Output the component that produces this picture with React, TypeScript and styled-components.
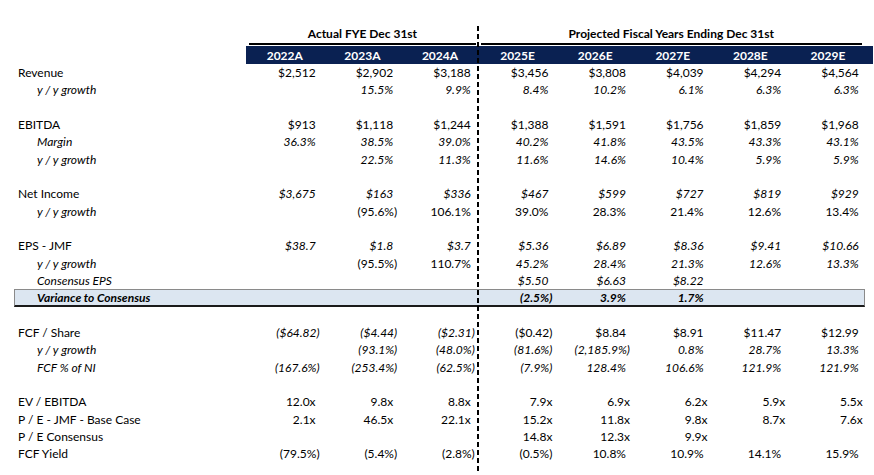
import styled, { createGlobalStyle } from 'styled-components'

const GlobalStyle = createGlobalStyle`
  html, body {
    margin: 0;
    padding: 0;
    background: #ffffff;
  }
  body {
    font-family: Lato, "Liberation Sans", sans-serif;
    font-size: 12px;
    color: #000;
  }
`

const NAVY = '#0a2152'
const COL = 77.6
const ROW = 17.33

type Row = {
  label?: string
  sub?: boolean       // indented, italic label
  strong?: boolean    // bold italic, sits in the shaded box
  values?: string[]
  italic?: string     // mask per column: 'i' italic, '-' upright
}

const actualYears = ['2022A', '2023A', '2024A']
const projectedYears = ['2025E', '2026E', '2027E', '2028E', '2029E']

const rows: Row[] = [
  { label: 'Revenue', values: ['$2,512', '$2,902', '$3,188', '$3,456', '$3,808', '$4,039', '$4,294', '$4,564'] },
  { label: 'y / y growth', sub: true, values: ['', '15.5%', '9.9%', '8.4%', '10.2%', '6.1%', '6.3%', '6.3%'], italic: 'iiiiiiii' },
  {},
  { label: 'EBITDA', values: ['$913', '$1,118', '$1,244', '$1,388', '$1,591', '$1,756', '$1,859', '$1,968'] },
  { label: 'Margin', sub: true, values: ['36.3%', '38.5%', '39.0%', '40.2%', '41.8%', '43.5%', '43.3%', '43.1%'], italic: 'iiiiiiii' },
  { label: 'y / y growth', sub: true, values: ['', '22.5%', '11.3%', '11.6%', '14.6%', '10.4%', '5.9%', '5.9%'], italic: 'iiiiiiii' },
  {},
  { label: 'Net Income', values: ['$3,675', '$163', '$336', '$467', '$599', '$727', '$819', '$929'], italic: 'iiiiiiii' },
  { label: 'y / y growth', sub: true, values: ['', '(95.6%)', '106.1%', '39.0%', '28.3%', '21.4%', '12.6%', '13.4%'] },
  {},
  { label: 'EPS - JMF', values: ['$38.7', '$1.8', '$3.7', '$5.36', '$6.89', '$8.36', '$9.41', '$10.66'], italic: 'iiiiiiii' },
  { label: 'y / y growth', sub: true, values: ['', '(95.5%)', '110.7%', '45.2%', '28.4%', '21.3%', '12.6%', '13.3%'], italic: '---iiiii' },
  { label: 'Consensus EPS', sub: true, values: ['', '', '', '$5.50', '$6.63', '$8.22', '', ''], italic: 'iiiiiiii' },
  { label: 'Variance to Consensus', sub: true, strong: true, values: ['', '', '', '(2.5%)', '3.9%', '1.7%', '', ''], italic: 'iiiiiiii' },
  {},
  { label: 'FCF / Share', values: ['($64.82)', '($4.44)', '($2.31)', '($0.42)', '$8.84', '$8.91', '$11.47', '$12.99'], italic: 'iii-----' },
  { label: 'y / y growth', sub: true, values: ['', '(93.1%)', '(48.0%)', '(81.6%)', '(2,185.9%)', '0.8%', '28.7%', '13.3%'], italic: 'iiiiiiii' },
  { label: 'FCF % of NI', sub: true, values: ['(167.6%)', '(253.4%)', '(62.5%)', '(7.9%)', '128.4%', '106.6%', '121.9%', '121.9%'], italic: 'iiiiiiii' },
  {},
  { label: 'EV / EBITDA', values: ['12.0x', '9.8x', '8.8x', '7.9x', '6.9x', '6.2x', '5.9x', '5.5x'] },
  { label: 'P / E - JMF - Base Case', values: ['2.1x', '46.5x', '22.1x', '15.2x', '11.8x', '9.8x', '8.7x', '7.6x'] },
  { label: 'P / E Consensus', values: ['', '', '', '14.8x', '12.3x', '9.9x', '', ''] },
  { label: 'FCF Yield', values: ['(79.5%)', '(5.4%)', '(2.8%)', '(0.5%)', '10.8%', '10.9%', '14.1%', '15.9%'] },
]

const HEAD_ROWS = 2

const Sheet = styled.div`
  display: grid;
  grid-template-columns: 246px repeat(8, ${COL}px) 6px;
  grid-template-rows: 21px 18px repeat(${rows.length}, ${ROW}px) 8px;
  margin-top: 25px;
  width: max-content;
`

const GroupTitle = styled.div<{ $start: number; $span: number; $ml: number; $mr: number }>`
  grid-row: 1;
  grid-column: ${p => p.$start} / span ${p => p.$span};
  margin: 0 ${p => p.$mr}px 1px ${p => p.$ml}px;
  border-bottom: 2px solid #000;
  display: flex;
  align-items: flex-end;
  justify-content: center;
  padding-bottom: 2px;
  font-weight: 700;
  color: #000;
  line-height: 14px;
`

const Band = styled.div`
  grid-row: 2;
  grid-column: 2 / -1;
  background: ${NAVY};
`

const YearHead = styled.div<{ $col: number }>`
  grid-row: 2;
  grid-column: ${p => p.$col};
  display: flex;
  align-items: center;
  justify-content: center;
  padding-top: 1px;
  color: #fff;
  font-weight: 700;
`

const Divider = styled.div`
  grid-row: 1 / -1;
  grid-column: 5;
  justify-self: start;
  width: 2px;
  margin-left: -2px;
  margin-top: 1px;
  background: repeating-linear-gradient(to bottom, #000 0 5px, transparent 5px 8px);
  z-index: 1;
`

const VarianceBox = styled.div<{ $row: number }>`
  grid-row: ${p => p.$row};
  grid-column: 1 / -1;
  margin: 0 8px 0 14px;
  background: #dce6f1;
  border: 1px solid #8a8a8a;
  border-bottom: 2px solid #1a1a1a;
`

const Label = styled.div<{ $row: number; $sub?: boolean; $strong?: boolean }>`
  grid-row: ${p => p.$row};
  grid-column: 1;
  padding: 1px 0 0 ${p => (p.$sub ? 37 : 18)}px;
  line-height: ${ROW - 1}px;
  white-space: nowrap;
  font-style: ${p => (p.$sub ? 'italic' : 'normal')};
  font-weight: ${p => (p.$strong ? 700 : 400)};
`

const Value = styled.div<{ $row: number; $col: number; $italic?: boolean; $strong?: boolean; $pad?: boolean }>`
  grid-row: ${p => p.$row};
  grid-column: ${p => p.$col};
  text-align: right;
  padding: 1px ${p => (p.$pad ? 8 : 4)}px 0 0;
  line-height: ${ROW - 1}px;
  white-space: nowrap;
  font-style: ${p => (p.$italic ? 'italic' : 'normal')};
  font-weight: ${p => (p.$strong ? 700 : 400)};
`

// accounting format: positives leave room for the closing paren,
// multiples in the projected block sit flush
const needsPad = (v: string, i: number) =>
  !v.endsWith(')') && !(v.endsWith('x') && i >= 3)

const App = () => {
  return (
    <>
      <GlobalStyle />
      <Sheet>
        <GroupTitle $start={2} $span={3} $ml={3} $mr={3}>Actual FYE Dec 31st</GroupTitle>
        <GroupTitle $start={5} $span={5} $ml={2} $mr={5}>Projected Fiscal Years Ending Dec 31st</GroupTitle>
        <Band />
        {[...actualYears, ...projectedYears].map((y, i) => (
          <YearHead key={y} $col={i + 2}>{y}</YearHead>
        ))}

        {rows.map((r, ri) =>
          r.strong ? <VarianceBox key={'box' + ri} $row={ri + HEAD_ROWS + 1} /> : null
        )}

        {rows.map((r, ri) => {
          const row = ri + HEAD_ROWS + 1
          if (!r.label) return null
          return [
            <Label key={'l' + ri} $row={row} $sub={r.sub} $strong={r.strong}>{r.label}</Label>,
            ...(r.values || []).map((v, ci) =>
              v ? (
                <Value
                  key={ri + '-' + ci}
                  $row={row}
                  $col={ci + 2}
                  $italic={r.italic?.[ci] === 'i'}
                  $strong={r.strong}
                  $pad={needsPad(v, ci)}
                >
                  {v}
                </Value>
              ) : null
            ),
          ]
        })}

        <Divider />
      </Sheet>
    </>
  )
}

export default App
